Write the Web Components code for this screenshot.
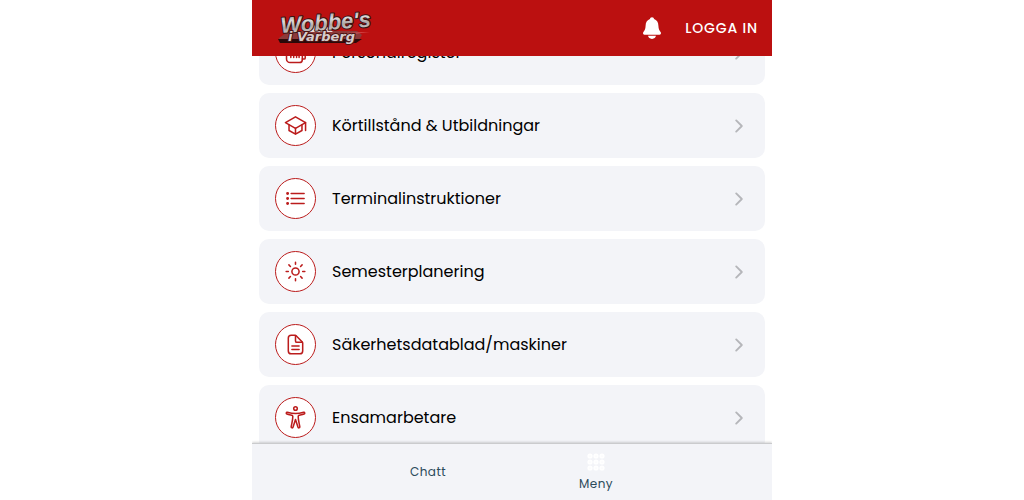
<!DOCTYPE html>
<html lang="sv">
<head>
<meta charset="utf-8">
<meta name="viewport" content="width=device-width, initial-scale=1">
<title>Wobbe's i Varberg</title>
<style>
  html, body { margin: 0; background: #fff; }
  body { font-family: Poppins, Inter, "Open Sans", sans-serif; color: #000; }
</style>
</head>
<body>
<phone-app></phone-app>

<script>
const ICONS = {
  people: '<path d="M56 160v240a80 80 0 0 0 80 80h208a64 64 0 0 0 64-64V160a48 48 0 0 0-48-48H104a48 48 0 0 0-48 48z"/><path d="M408 400h40a24 24 0 0 0 24-24V208M152 368V208h64v160M280 368V208h56v160M152 288h64"/>',
  school: '<path d="M32 192 256 64l224 128-224 128L32 192z"/><path d="M112 240v128l144 80 144-80V240M480 368V192M256 320v128"/>',
  list: '<path d="M160 144h288M160 256h288M160 368h288"/><circle cx="80" cy="144" r="16"/><circle cx="80" cy="256" r="16"/><circle cx="80" cy="368" r="16"/>',
  sunny: '<path d="M256 48v48M256 416v48M403 109l-34 34M143 369l-34 34M464 256h-48M96 256H48M403 403l-34-34M143 143l-34-34"/><circle cx="256" cy="256" r="80"/>',
  document: '<path d="M416 221v179a64 64 0 0 1-64 64H160a64 64 0 0 1-64-64V112a64 64 0 0 1 64-64h83a32 32 0 0 1 22 9l142 142a32 32 0 0 1 9 22z"/><path d="M256 56v120a32 32 0 0 0 32 32h120M176 288h160M176 368h160"/>',
  body: '<circle cx="256" cy="56" r="40"/><path d="M438 140c-50 14-116 28-182 28s-132-14-182-28c-24-6-34 30-10 38 34 11 78 20 112 28 14 4 20 12 20 28 0 84-22 146-36 224-4 32 34 40 42 10l54-168 54 168c8 30 46 22 42-10-14-78-36-140-36-224 0-16 6-24 20-28 34-8 78-17 112-28 24-8 14-44-10-38z"/>',
};

function define(name, html, setup) {
  const template = document.createElement('template');
  template.innerHTML = html;
  customElements.define(name, class extends HTMLElement {
    constructor() {
      super();
      this.attachShadow({ mode: 'open' }).append(template.content.cloneNode(true));
    }
    connectedCallback() { if (setup) setup(this, this.shadowRoot); }
  });
}

define('brand-logo', `
  <style>
    :host { display: block; }
    a { display: block; }
    svg { display: block; width: 96px; height: 40px; overflow: visible; }
  </style>
  <a href="#" aria-label="Wobbe's i Varberg">
    <svg viewBox="0 0 96 40">
      <defs>
        <linearGradient id="chrome" x1="0" y1="0" x2="0" y2="1">
          <stop offset="0" stop-color="#8d8585"/><stop offset=".35" stop-color="#dedada"/>
          <stop offset=".6" stop-color="#b0a8a8"/><stop offset="1" stop-color="#d6d0d0"/>
        </linearGradient>
      </defs>
      <path d="M3 32 13 25h68l5 4-3 5H3z" fill="#8d3a3a"/>
      <path d="M31 26l7-7 7 7zM44 26l6-6 7 6z" fill="#f0dada"/>
      <path d="M2 33h84l-6 4H4z" fill="#2a0909"/>
      <path d="M68 27l26-1-26 3z" fill="#dd5a5a"/>
      <g font-weight="700" font-style="italic" paint-order="stroke" stroke-linejoin="round">
        <text x="5" y="27" font-family="'Liberation Sans', sans-serif" font-size="22" fill="url(#chrome)" stroke="#361313" stroke-width="2" transform="rotate(-4 5 27)">Wobbe's</text>
        <text x="12" y="35" font-family="'DejaVu Sans', sans-serif" font-size="13" fill="#d6cccc" stroke="#4d1515" stroke-width="2">i Varberg</text>
      </g>
    </svg>
  </a>`);

define('app-header', `
  <style>
    :host { display: flex; align-items: center; justify-content: space-between; height: 56px;
            box-sizing: border-box; padding: 0 14px 4px 24px; background: #bb1010; color: #fff; flex: none; }
    .actions { display: flex; align-items: center; gap: 21px; }
    button { display: block; margin: 0; padding: 0; border: 0; background: none; color: inherit; font: inherit; cursor: pointer; }
    .login { font-size: 14px; line-height: 20px; font-weight: 500; letter-spacing: 0.06em; padding-top: 4px; }
    svg { display: block; width: 24px; height: 24px; padding-top: 4px; }
  </style>
  <brand-logo></brand-logo>
  <div class="actions">
    <button aria-label="Notiser">
      <svg viewBox="0 0 512 512" fill="currentColor"><path d="M440 341c-21-28-47-60-47-128 0-79-40-129-93-147-1-22-18-42-44-42s-43 20-44 42c-53 18-93 68-93 147 0 68-26 100-47 128-18 25-5 57 25 57h318c30 0 43-32 25-57z"/><path d="M172 422h168c-6 38-36 66-84 66s-78-28-84-66z"/></svg>
    </button>
    <button class="login">LOGGA IN</button>
  </div>`);

define('menu-row', `
  <style>
    :host { display: block; }
    a { display: flex; align-items: center; gap: 16px; padding: 12px 16px; border-radius: 10px;
        background: #f3f4f8; color: #000; text-decoration: none; }
    .badge { display: grid; place-items: center; flex: none; box-sizing: border-box; width: 41px; height: 41px;
             border: 1px solid #bb1c1c; border-radius: 50%; background: #fff; }
    .badge svg { width: 23px; height: 23px; stroke: #bb1c1c; stroke-width: 34; overflow: visible; }
    svg { display: block; fill: none; stroke-linecap: round; stroke-linejoin: round; }
    .label { flex: 1; font-size: 16px; line-height: 24px; }
    .chevron { width: 20px; height: 20px; stroke: #b5b6ba; stroke-width: 48; }
  </style>
  <a href="#">
    <span class="badge"><svg class="icon" viewBox="0 0 512 512" aria-hidden="true"></svg></span>
    <span class="label"><slot></slot></span>
    <svg class="chevron" viewBox="0 0 512 512" aria-hidden="true"><path d="M184 112l144 144-144 144"/></svg>
  </a>`, (host, root) => { root.querySelector('.icon').innerHTML = ICONS[host.getAttribute('icon')] || ''; });

define('tab-item', `
  <style>
    :host { display: block; width: 168px; }
    a { display: flex; flex-direction: column; align-items: center; justify-content: center; height: 100%;
        color: #2b4a5a; text-decoration: none; font-size: 12px; line-height: 16px; letter-spacing: 0.04em; gap: 5px; }
    ::slotted(svg) { display: block; width: 18px; height: 18px; }
  </style>
  <a href="#"><slot name="icon"></slot><slot></slot></a>`);

define('tab-bar', `
  <style>
    :host { display: flex; justify-content: center; flex: none; height: 56px; position: relative;
            background: #f3f4f8; border-top: 1px solid #cacbcd; box-shadow: 0 -1px 2px rgba(0,0,0,.16); }
  </style>
  <slot></slot>`);

define('phone-app', `
  <style>
    :host { display: flex; flex-direction: column; width: 100%; max-width: 520px; height: 100vh; margin: 0 auto; overflow: hidden; }
    main { flex: 1; min-height: 0; overflow-y: auto; scrollbar-width: none; }
    nav { display: flex; flex-direction: column; gap: 8px; padding: 8px 7px; }
  </style>
  <app-header></app-header>
  <main>
    <nav>
      <menu-row icon="people">Personalregister</menu-row>
      <menu-row icon="school">Körtillstånd &amp; Utbildningar</menu-row>
      <menu-row icon="list">Terminalinstruktioner</menu-row>
      <menu-row icon="sunny">Semesterplanering</menu-row>
      <menu-row icon="document">Säkerhetsdatablad/maskiner</menu-row>
      <menu-row icon="body">Ensamarbetare</menu-row>
    </nav>
  </main>
  <tab-bar>
    <tab-item>Chatt</tab-item>
    <tab-item>
      <svg slot="icon" viewBox="0 0 18 18" fill="none" stroke="#fff" stroke-width="2" aria-hidden="true">
        <circle cx="3" cy="3" r="1.6"/><circle cx="9" cy="3" r="1.6"/><circle cx="15" cy="3" r="1.6"/>
        <circle cx="3" cy="9" r="1.6"/><circle cx="9" cy="9" r="1.6"/><circle cx="15" cy="9" r="1.6"/>
        <circle cx="3" cy="15" r="1.6"/><circle cx="9" cy="15" r="1.6"/><circle cx="15" cy="15" r="1.6"/>
      </svg>Meny
    </tab-item>
  </tab-bar>`, (host, root) => { root.querySelector('main').scrollTop = 44; });
</script>
</body>
</html>
